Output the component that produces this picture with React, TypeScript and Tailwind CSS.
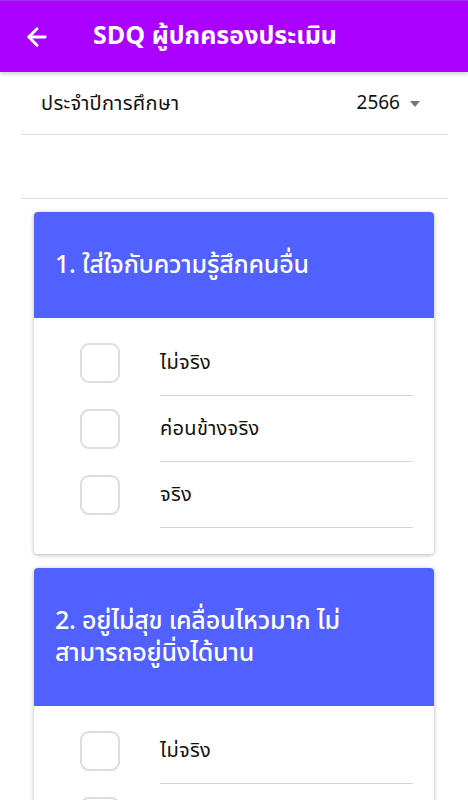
import { ArrowLeft } from "lucide-react";

const font = { fontFamily: '"Noto Sans Thai", "Noto Sans", Roboto, sans-serif' };

const options = ["ไม่จริง", "ค่อนข้างจริง", "จริง"];

const questions = [
  "1. ใส่ใจกับความรู้สึกคนอื่น",
  "2. อยู่ไม่สุข เคลื่อนไหวมาก ไม่สามารถอยู่นิ่งได้นาน",
];

const QuestionCard = ({ title }: { title: string }) => (
  <div className="mx-[34px] mb-[14px] rounded-[4px] bg-white shadow-[0_1px_4px_rgba(0,0,0,0.3)] overflow-hidden">
    <div className="bg-[#5161ff] pl-[21px] pr-[30px] py-[37px] text-[25px] leading-[32px] font-medium text-white tracking-[-0.2px]">
      {title}
    </div>
    <div className="pt-[12px] pb-[26px]">
      {options.map((o) => (
        <div key={o} className="flex items-center h-[66px]">
          <div className="ml-[46px] w-[40px] h-[40px] rounded-[9px] border-2 border-[#dddddd] shrink-0" />
          <div className="ml-[40px] mr-[21px] flex-1 h-full flex items-center border-b border-[#d6d6d6] text-[20px] text-[#111] tracking-[0.3px]">
            {o}
          </div>
        </div>
      ))}
    </div>
  </div>
);

export default function App() {
  return (
    <div className="min-h-screen bg-white" style={font}>
      <header className="relative z-10 h-[72px] bg-[#aa00ff] border-t border-[#9c2ef0] flex items-center shadow-[0_2px_5px_rgba(0,0,0,0.2)]">
        <ArrowLeft className="ml-[23px] text-white" size={28} strokeWidth={2.5} />
        <h1 className="ml-[42px] text-white text-[25px] font-bold">SDQ ผู้ปกครองประเมิน</h1>
      </header>

      <div className="mx-[21px] h-[63px] flex items-center justify-between border-b border-[#dcdcdc] pl-[20px] pr-[27px] pt-[2px]">
        <span className="text-[20px] text-[#111] tracking-[0.3px]">ประจำปีการศึกษา</span>
        <span className="flex items-center gap-[10px] text-[19px] text-[#111]">
          2566
          <span className="w-0 h-0 border-l-[5px] border-r-[5px] border-t-[6px] border-l-transparent border-r-transparent border-t-[#777]" />
        </span>
      </div>
      <div className="mx-[21px] h-[64px] border-b border-[#dcdcdc]" />

      <div className="pt-[13px]">
        {questions.map((q) => (
          <QuestionCard key={q} title={q} />
        ))}
      </div>
    </div>
  );
}
